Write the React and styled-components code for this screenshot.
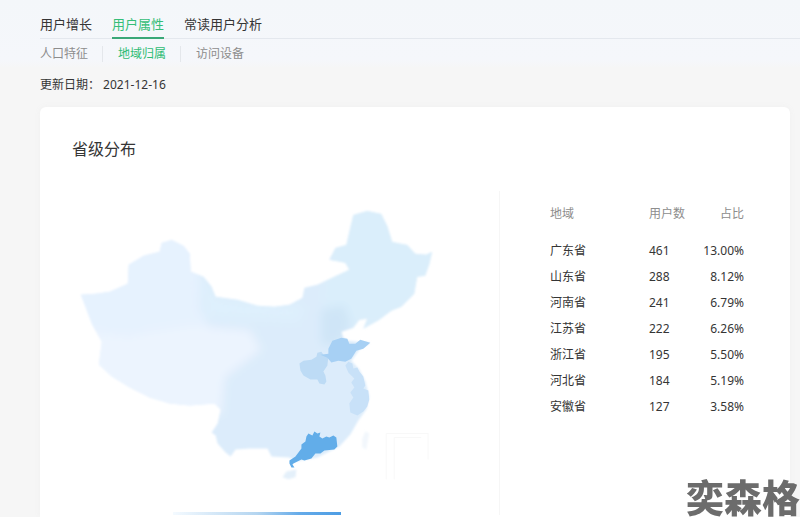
import React, { useState } from 'react';
import styled, { createGlobalStyle } from 'styled-components';

const GlobalStyle = createGlobalStyle`
  body {
    margin: 0;
    background: #f6f6f6;
    color: #353535;
    font-family: 'Noto Sans', 'Noto Sans CJK SC', sans-serif;
    font-size: 12px;
    line-height: 20px;
  }
`;

const Page = styled.div`
  display: flex;
  flex-direction: column;
  min-height: 100vh;
  padding-top: 10px;
  box-sizing: border-box;
  background: linear-gradient(#f4f7fa, #f5f7fb 60px, #f6f6f6 68px);
`;

const Tabs = styled.nav`
  display: flex;
  gap: 20px;
  margin-left: 40px;
  border-bottom: 1px solid #e4e8ee;
`;

const Tab = styled.a`
  padding: 4px 0 3px;
  margin-bottom: -1px;
  border-bottom: 2px solid ${(props) => (props.$active ? '#3aa878' : 'transparent')};
  color: ${(props) => (props.$active ? '#35be78' : '#353535')};
  font-size: 13px;
  text-decoration: none;
`;

const SubTabs = styled.nav`
  display: flex;
  align-items: center;
  padding: 7px 0 4px 40px;
`;

const SubTab = styled.a`
  padding: 0 14px 0 15px;
  border-right: 1px solid #e4e7eb;
  color: ${(props) => (props.$active ? '#2fbc74' : '#8d8d8d')};
  line-height: 16px;
  text-decoration: none;
  &:first-child {
    padding-left: 0;
  }
  &:last-child {
    border-right: none;
  }
`;

const UpdateDate = styled.p`
  margin: 9px 0 12px 40px;
`;

const Card = styled.section`
  flex: 1;
  margin: 0 10px 0 40px;
  border-radius: 6px 6px 0 0;
  background: #fff;
  box-shadow: 0 0 6px #f0f0f0;
`;

const Title = styled.h2`
  margin: 0;
  padding: 30px 32px;
  font-size: 16px;
  font-weight: 400;
  line-height: 24px;
`;

const Content = styled.div`
  display: grid;
  grid-template-columns: minmax(0, 46fr) minmax(0, 29fr);
`;

const MapPanel = styled.div`
  display: flex;
  flex-direction: column;
  border-right: 1px solid #f6f6f6;
`;

const MapSvg = styled.svg`
  display: block;
  width: 100%;
`;

const Scale = styled.div`
  width: 168px;
  height: 3px;
  margin: 22px 0 0 133px;
  background: linear-gradient(90deg, #f4faff, #b4d5f0 50%, #65abe9 75%, #4d9de4);
`;

const TablePanel = styled.div`
  padding: 10px 46px 0 50px;
`;

const Table = styled.table`
  width: 100%;
  border-collapse: collapse;
`;

const HeadCell = styled.th`
  width: ${(props) => props.$width};
  height: 26px;
  padding: 0 0 11px;
  color: #8d8d8d;
  font-weight: 400;
  text-align: ${(props) => props.$align || 'left'};
`;

const Cell = styled.td`
  height: 26px;
  padding: 0;
  text-align: ${(props) => props.$align || 'left'};
`;

const Watermark = styled.div`
  position: fixed;
  right: 0;
  bottom: 0;
  color: #6c6c6c;
  font-family: 'Noto Sans CJK SC', sans-serif;
  font-size: 38px;
  font-weight: 900;
  line-height: 42px;
  white-space: nowrap;
`;

const tabs = ['用户增长', '用户属性', '常读用户分析'];
const subTabs = ['人口特征', '地域归属', '访问设备'];

const provinces = [
  { name: '广东省', users: 461, share: '13.00%' },
  { name: '山东省', users: 288, share: '8.12%' },
  { name: '河南省', users: 241, share: '6.79%' },
  { name: '江苏省', users: 222, share: '6.26%' },
  { name: '浙江省', users: 195, share: '5.50%' },
  { name: '河北省', users: 184, share: '5.19%' },
  { name: '安徽省', users: 127, share: '3.58%' },
];

const outline =
  'M81 295L96 294L110 292L128 284L129 265L144 256L160 252L162 243L172 240L184 246L190 254L191 272L204 277L212 287L216 297L238 300L258 306L275 307L290 305L303 298L305 288L318 285L335 277L350 270L346 263L330 260L336 248L347 245L350 232L354 215L368 211L382 214L388 226L393 242L408 245L416 254L427 255L433 252L430 265L426 276L418 277L415 294L402 307L392 311L380 320L364 329L368 319L360 320L354 328L342 332L344 338L349 341L358 342L371 343L360 350L352 361L360 370L366 382L370 397L367 410L359 421L351 435L340 447L318 458L296 462L290 458L272 457L268 449L250 449L236 450L231 457L226 453L218 444L216 436L212 433L218 424L221 410L215 404L190 406L170 404L150 398L130 388L112 377L99 365L102 342L92 324L86 308Z';

function ChinaMap() {
  return (
    <MapSvg viewBox="40 191 460 300" role="img" aria-label="省级分布">
      <defs>
        <clipPath id="country">
          <path d={outline} />
        </clipPath>
        <filter id="shade" x="-20%" y="-20%" width="140%" height="140%">
          <feGaussianBlur stdDeviation="5" />
        </filter>
        <filter id="edge">
          <feGaussianBlur stdDeviation="1" />
        </filter>
      </defs>
      <g filter="url(#edge)">
        <g clipPath="url(#country)">
          <path fill="#dcecfb" d="M70 200H450V490H70Z" />
          <g filter="url(#shade)">
            <path fill="#e6f2fe" d="M70 230H200V310L215 335H70Z" />
            <path fill="#ecf4fe" d="M70 332L130 336L195 326L250 330L262 350L225 378L222 415H70Z" />
            <path fill="#def0fd" d="M200 270L220 298L305 306L300 322L205 318Z" />
            <path fill="#daeefb" d="M340 200H440V330H340L322 300Z" />
            <path fill="#cfe5f7" d="M322 310L345 305L352 325L338 345L322 345Z" />
          </g>
        </g>
        <path fill="#e4f0fa" d="M287 472L297 470L296 478L289 480L283 478Z" />
        <path fill="#f2f7fc" d="M366 432L370 434L367 450L363 448L363 439Z" />
      </g>
      <path
        fill="#c8e1f8"
        d="M349 362L353 364L354 369L358 368L360 372L364 377L366 386L364 389L369 391L370 400L368 407L364 412L358 416L351 413L350 404L354 398L351 393L355 388L352 383L355 379L349 373L346 366Z"
      />
      <path
        fill="#bddbf5"
        d="M300 364L304 361L312 360L317 357L318 353L322 352L324 355L329 357L328 366L324 372L326 376L327 382L325 385L320 384L318 380L311 380L304 376L301 371Z"
      />
      <path
        fill="#a7d0f4"
        d="M329 349L333 341L342 338L348 339L350 344L356 344L361 340L371 343L364 349L357 351L352 359L346 362L339 361L332 363L328 358L321 355L329 354Z"
      />
      <path
        fill="#62ade9"
        d="M307 437L309 434L313 436L315 432L318 434L321 433L320 437L323 439L327 437L330 438L334 436L337 438L338 447L335 450L325 451L321 454L316 454L312 459L305 461L302 460L294 464L293 465L295 468L292 468L290 464L290 461L296 457L302 449L302 445L306 442Z"
      />
      <path fill="none" stroke="#f8f8f8" d="M387 480V434H429V460M395 480V438H422" />
    </MapSvg>
  );
}

function App() {
  const [tab, setTab] = useState('用户属性');
  const [subTab, setSubTab] = useState('地域归属');

  return (
    <Page>
      <GlobalStyle />
      <Tabs>
        {tabs.map((name) => (
          <Tab key={name} href="#" $active={name === tab} onClick={() => setTab(name)}>
            {name}
          </Tab>
        ))}
      </Tabs>
      <SubTabs>
        {subTabs.map((name) => (
          <SubTab key={name} href="#" $active={name === subTab} onClick={() => setSubTab(name)}>
            {name}
          </SubTab>
        ))}
      </SubTabs>
      <UpdateDate>更新日期： 2021-12-16</UpdateDate>
      <Card>
        <Title>省级分布</Title>
        <Content>
          <MapPanel>
            <ChinaMap />
            <Scale />
          </MapPanel>
          <TablePanel>
            <Table>
              <thead>
                <tr>
                  <HeadCell $width="51%">地域</HeadCell>
                  <HeadCell $width="22%">用户数</HeadCell>
                  <HeadCell $align="right">占比</HeadCell>
                </tr>
              </thead>
              <tbody>
                {provinces.map((row) => (
                  <tr key={row.name}>
                    <Cell>{row.name}</Cell>
                    <Cell>{row.users}</Cell>
                    <Cell $align="right">{row.share}</Cell>
                  </tr>
                ))}
              </tbody>
            </Table>
          </TablePanel>
        </Content>
      </Card>
      <Watermark>奕森格</Watermark>
    </Page>
  );
}

export default App;
